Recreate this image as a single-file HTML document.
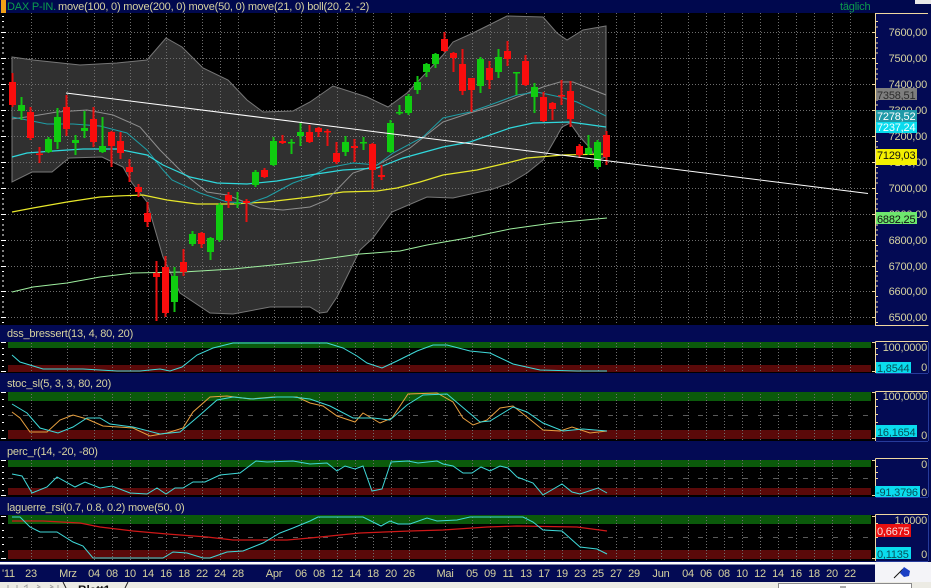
<!DOCTYPE html>
<html><head><meta charset="utf-8"><style>
html,body{margin:0;padding:0;background:#000;width:931px;height:588px;overflow:hidden}
svg{display:block}
text{font-family:"Liberation Sans",sans-serif;font-size:11px;letter-spacing:-.2px}
.c{fill:#d6d2a0}
.e{text-anchor:end}
.m{text-anchor:middle}
.l{fill:none}
</style></head><body>
<svg width="931" height="588" viewBox="0 0 931 588" xmlns="http://www.w3.org/2000/svg">
<rect width="931" height="588" fill="#000"/>
<!-- bollinger area -->
<polygon fill="#303030" stroke="#777" stroke-width="1" points="12,57 33,60 80,65 117,63 147,60 166,38 182,47 203,68 228,80 247,100 263,112 293,111 310,102 333,86 367,97 388,107 407,93 443,55 453,42 473,33 507,16 543,17 557,33 567,40 583,30 606,26 606,157 597,160 590,148 580,137 570,123 562,127 553,143 543,160 527,173 510,183 493,189 453,198 427,197 392,212 373,238 360,250 337,297 327,312 320,313 310,307 270,307 233,314 210,313 180,293 163,257 147,202 132,183 123,167 102,157 69,158 52,172 32,172 12,182"/>
<!-- indicator bands -->
<rect x="8" y="342" width="863" height="6" fill="#0b5a0b"/><rect x="8" y="365" width="863" height="7" fill="#5a0909"/>
<rect x="8" y="392" width="863" height="9" fill="#0b5a0b"/><rect x="8" y="430" width="863" height="9" fill="#5a0909"/>
<rect x="8" y="460" width="863" height="7" fill="#0b5a0b"/><rect x="8" y="488" width="863" height="7" fill="#5a0909"/>
<rect x="8" y="515" width="863" height="9" fill="#0b5a0b"/><rect x="8" y="550" width="863" height="9" fill="#5a0909"/>
<!-- grid -->
<path fill="none" stroke="#6e6e6e" stroke-dasharray="1 2" d="M31.5 13V562M67.5 13V562M94.5 13V562M112.5 13V562M130.5 13V562M148.5 13V562M166.5 13V562M184.5 13V562M202.5 13V562M220.5 13V562M238.5 13V562M274.5 13V562M301.5 13V562M319.5 13V562M337.5 13V562M355.5 13V562M373.5 13V562M391.5 13V562M409.5 13V562M445.5 13V562M472.5 13V562M490.5 13V562M508.5 13V562M526.5 13V562M544.5 13V562M562.5 13V562M580.5 13V562M598.5 13V562M616.5 13V562M634.5 13V562M661.5 13V562M688.5 13V562M706.5 13V562M724.5 13V562M742.5 13V562M760.5 13V562M778.5 13V562M796.5 13V562M814.5 13V562M832.5 13V562M850.5 13V562"/>
<path fill="none" stroke="#6e6e6e" stroke-dasharray="1 2" d="M8 32.5H871M8 58.5H871M8 84.5H871M8 110.5H871M8 136.5H871M8 162.5H871M8 188.5H871M8 214.5H871M8 240.5H871M8 266.5H871M8 291.5H871M8 317.5H871"/>
<path fill="none" stroke="#5a5a5a" stroke-dasharray="5 10" d="M8 415.5H871M8 478.5H871M8 537.5H871"/>
<!-- moving averages -->
<polyline class="l" stroke="#9fef9f" points="12,292 33,287 67,283 100,277 133,273 183,272 233,269 283,264 310,261 360,254 400,251 427,245 467,238 510,229 553,223 607,218"/>
<polyline class="l" stroke="#e8e82a" stroke-width="1.2" points="12,212 33,208 67,202 100,197 117,196 143,195 167,200 197,204 233,204 267,202 310,197 343,192 377,191 397,188 420,182 443,175 477,170 507,163 527,158 563,155 606,154"/>
<polyline class="l" stroke="#8e8e8e" points="12,119 33,116 57,112 87,110 113,115 140,127 160,150 183,173 207,192 227,195 260,208 283,210 310,207 327,200 353,173 377,165 410,148 443,122 470,113 497,105 523,95 543,87 560,82 573,82 606,95"/>
<polyline class="l" stroke="#1f9ea6" points="12,117 27,120 47,124 73,124 100,126 127,133 147,150 163,170 172,180 200,193 227,202 250,203 267,197 293,183 310,177 327,168 353,163 377,165 393,153 423,137 443,118 470,112 490,105 517,95 537,92 560,97 577,102 606,116"/>
<polyline class="l" stroke="#2fd8dc" stroke-width="1.2" points="12,157 27,153 53,151 83,149 117,149 147,155 163,165 190,177 217,183 247,184 277,181 310,175 343,170 377,168 403,158 443,147 470,142 510,128 533,123 570,122 606,127"/>
<!-- candles wicks -->
<g transform="translate(.5 0)" fill="none">
<path stroke="#e81010" stroke-width="2" d="M12 73V107M30 107V140M39 147V163M66 95V136M93 107V147M111 131V167M120 132V159M129 159V182M138 184V197M147 202V227M156 261V321M165 256V317M183 249V276M201 232V248M228 192V208M246 199V222M264 168V178M282 135V144M309 125V143M318 127V137M327 129V146M336 142V164M354 139V162M372 143V189M381 165V180M444 32V52M453 52V72M462 49V95M471 78V112M489 61V89M507 41V66M525 55V86M543 92V122M552 102V120M561 80V105M570 81V127M579 144V158M606 131V165"/>
<path stroke="#12c412" stroke-width="2" d="M21 97V120M48 137V153M57 108V149M75 135V155M84 111V138M102 117V153M174 267V312M192 231V246M210 237V260M219 203V242M237 192V208M255 170V187M273 137V166M291 139V154M300 123V146M345 136V156M363 137V150M390 120V153M399 105V115M408 94V115M417 76V94M426 63V77M435 53V68M480 57V93M498 49V78M516 72V95M534 83V113M588 135V155M597 140V169"/>
<path stroke="#fa0d0d" stroke-width="7" d="M12 82V105M30 112V138M66 107V129M93 119V142M111 132V146M120 141V153M129 167V172M138 187V192M147 213V222M156 273V277M165 267V313M183 262V272M201 233V244M228 195V201M264 170V177M309 132V142M318 128V132M336 153V162M372 144V170M444 39V51M453 53V58M462 64V91M471 78V90M489 68V80M507 51V59M525 61V85M543 97V121M552 103V109M570 91V119M579 146V155M606 135V157"/>
<path stroke="#fa0d0d" stroke-width="7" d="M39 153.500V155M246 201V203M282 141V143M327 131V132.500M354 146V148M381 175V177M561 95V96.500"/>
<path stroke="#10cc10" stroke-width="7" d="M21 105V111M48 139V152M57 117V142M75 140V143M84 128V131M102 146V152M174 276V302M192 234V244M210 238V252M219 205V240M237 203V204M255 172V185M273 141V165M291 142V143.500M300 132V136M345 142V152M363 142V143.500M390 123V152M399 112V113.500M408 96V113M417 82V90M426 64V72M435 54V64M480 59V86M498 57V72M516 72V73.500M534 87V97M588 148V154M597 142V167"/>
</g>
<!-- trend line -->
<path d="M66 93L868 193.500" stroke="#fff" stroke-width="1" fill="none"/>
<!-- indicator lines -->
<polyline class="l" stroke="#3fd9d9" points="12,355 20,362 43,369 83,369 117,371 140,371 160,369 170,371 182,367 197,355 213,348 233,343 267,343 310,343 327,343 343,348 357,356 367,363 382,368 397,361 417,351 433,345 447,345 470,351 490,353 513,364 540,370 577,371 607,371"/>
<polyline class="l" stroke="#e8a040" points="12,412 20,418 30,432 47,432 60,420 73,415 87,419 103,426 133,428 150,436 167,433 183,428 193,412 210,397 227,396 250,399 273,397 297,397 310,403 323,406 337,416 355,422 363,413 380,423 392,418 408,394 437,393 453,402 463,418 473,425 487,420 500,408 513,406 527,417 543,430 560,431 572,427 590,433 607,431"/>
<polyline class="l" stroke="#3fd9d9" points="12,404 27,413 40,428 58,433 73,427 87,418 100,418 110,424 133,427 160,434 180,432 200,415 217,400 233,397 253,399 277,397 293,397 310,399 330,406 353,418 373,418 390,420 407,405 423,395 447,394 460,405 480,422 490,421 513,407 527,412 543,423 563,431 583,429 607,431"/>
<polyline class="l" stroke="#3fd9d9" points="12,474 22,476 32,493 47,487 57,477 75,487 85,482 100,488 112,486 130,493 147,494 157,488 166,494 175,488 183,488 193,482 205,482 220,475 240,473 256,461 267,462 293,461 310,464 327,463 337,471 345,466 355,469 363,466 372,491 382,489 391,462 408,461 418,463 437,461 443,464 453,466 463,473 472,473 481,467 490,471 500,466 508,468 517,477 533,483 543,495 562,484 572,492 580,494 598,488 607,493"/>
<polyline class="l" stroke="#d01818" stroke-width="1.2" points="12,521 43,521 80,523 100,527 133,531 167,534 207,537 233,540 260,540 287,540 310,538 330,536 360,533 410,531 443,530 487,527 517,526 577,527 607,531"/>
<polyline class="l" stroke="#3fd9d9" points="12,517 20,517 30,527 40,532 57,532 73,542 83,546 93,558 150,558 163,558 173,552 187,553 203,558 210,558 227,552 243,551 263,543 280,533 293,528 310,521 318,517 363,517 381,526 390,521 398,524 410,524 427,518 437,521 457,520 470,517 523,517 533,522 543,530 562,531 580,547 597,549 607,554"/>
<!-- header bands -->
<rect x="0" y="0" width="931" height="13" fill="#00084e"/>
<rect x="1" y="0" width="5" height="13" fill="#f0a018"/>
<rect x="0" y="325" width="875" height="17" fill="#030a54"/>
<rect x="0" y="373" width="875" height="19" fill="#030a54"/>
<rect x="0" y="441" width="875" height="19" fill="#030a54"/>
<rect x="0" y="497" width="875" height="18" fill="#030a54"/>
<text x="7" y="10" fill="#0c9c4c">DAX P-IN.</text>
<text x="58" y="10" class="c">move(100, 0) move(200, 0) move(50, 0) move(21, 0) boll(20, 2, -2)</text>
<text x="840" y="10" fill="#0c9c4c">täglich</text>
<rect x="915" y="0" width="16" height="4" fill="#e8e8e8"/>
<text x="7" y="337" class="c">dss_bressert(13, 4, 80, 20)</text>
<text x="7" y="387" class="c">stoc_sl(5, 3, 3, 80, 20)</text>
<text x="7" y="455" class="c">perc_r(14, -20, -80)</text>
<text x="7" y="511" class="c">laguerre_rsi(0.7, 0.8, 0.2) move(50, 0)</text>
<!-- left ticks -->
<path fill="none" stroke="#fff" d="M2 16.500H4M2 21.500H4M2 27H4M1 32.500H6M2 37.500H4M2 43H4M2 48H4M2 53H4M1 58.500H6M2 63.500H4M2 69H4M2 74H4M2 79H4M1 84.500H6M2 89.500H4M2 95H4M2 100H4M2 105H4M1 110.500H6M2 115.500H4M2 121H4M2 126H4M2 131H4M1 136.500H6M2 141.500H4M2 147H4M2 152H4M2 157H4M1 162.500H6M2 167.500H4M2 173H4M2 178H4M2 183H4M1 188.500H6M2 193.500H4M2 199H4M2 204H4M2 209H4M1 214.500H6M2 219.500H4M2 225H4M2 230H4M2 235H4M1 240.500H6M2 245.500H4M2 251H4M2 256H4M2 261H4M1 266.500H6M2 271.500H4M2 276H4M2 281H4M2 286H4M1 291.500H6M2 296.500H4M2 302H4M2 307H4M2 312H4M1 317.500H6M2 322.500H4"/>
<path fill="none" stroke="#fff" d="M1 342.500H6M2 348.500H4M2 354.500H4M2 360.500H4M2 366.500H4M1 371.500H6M1 392.500H6M2 399.500H4M2 406.500H4M2 414.500H4M2 422.500H4M2 430.500H4M1 438.500H6M1 460.500H6M2 466.500H4M2 472.500H4M2 478.500H4M2 484.500H4M2 490.500H4M1 495.500H6M1 516.500H6M2 523.500H4M2 530.500H4M2 537.500H4M2 544.500H4M2 551.500H4M1 558.500H6"/>
<!-- right axis -->
<rect x="875" y="13" width="56" height="549" fill="#030a54"/>
<rect x="875" y="0" width="40" height="13" fill="#00084e"/>
<path fill="none" stroke="#f0d8a0" d="M928 13.500H875.500V325.500H928.500M875.500 341.500H928M875.500 341.500V373M875.500 391.500H928M875.500 391.500V441M875.500 458.500H928M875.500 458.500V497M875.500 514.500H928M875.500 514.500V561"/>
<path fill="none" stroke="#263a9a" d="M876 373.500H928M928.500 342V373M876 441.500H928M928.500 392V441M876 497.500H928M928.500 459V497M876 561.500H928M928.500 515V561"/>
<path fill="none" stroke="#f0d8a0" d="M872 32.500H875M872 58.500H875M872 84.500H875M872 110.500H875M872 136.500H875M872 162.500H875M872 188.500H875M872 214.500H875M872 240.500H875M872 266.500H875M872 291.500H875M872 317.500H875M876 21.500H878M876 27H878M876 37.500H878M876 43H878M876 48H878M876 53H878M876 63.500H878M876 69H878M876 74H878M876 79H878M876 89.500H878M876 95H878M876 100H878M876 105H878M876 115.500H878M876 121H878M876 126H878M876 131H878M876 141.500H878M876 147H878M876 152H878M876 157H878M876 167.500H878M876 173H878M876 178H878M876 183H878M876 193.500H878M876 199H878M876 204H878M876 209H878M876 219.500H878M876 225H878M876 230H878M876 235H878M876 245.500H878M876 251H878M876 256H878M876 261H878M876 271.500H878M876 276H878M876 281H878M876 286H878M876 296.500H878M876 302H878M876 307H878M876 312H878M876 322.500H878M872 342.500H875M872 371.500H875M872 392.500H875M872 438.500H875M872 460.500H875M872 495.500H875M872 516.500H875M872 558.500H875M876 399.500H878M876 406.500H878M876 414.500H878M876 422.500H878M876 466.500H878M876 472.500H878M876 478.500H878M876 523.500H878M876 530.500H878M876 537.500H878M876 348.500H878M876 354.500H878"/>
<text class="c e" x="927" y="36">7600,00</text>
<text class="c e" x="927" y="62">7500,00</text>
<text class="c e" x="927" y="88">7400,00</text>
<text class="c e" x="927" y="114">7300,00</text>
<text class="c e" x="927" y="140">7200,00</text>
<text class="c e" x="927" y="166">7100,00</text>
<text class="c e" x="927" y="192">7000,00</text>
<text class="c e" x="927" y="218">6900,00</text>
<text class="c e" x="927" y="244">6800,00</text>
<text class="c e" x="927" y="270">6700,00</text>
<text class="c e" x="927" y="295">6600,00</text>
<text class="c e" x="927" y="321">6500,00</text>
<text class="c e" x="927" y="351">100,0000</text>
<text class="c e" x="927" y="371">0</text>
<text class="c e" x="927" y="400">100,0000</text>
<text class="c e" x="927" y="439">0</text>
<text class="c e" x="927" y="468">0</text>
<text class="c e" x="927" y="496">0</text>
<text class="c e" x="927" y="524">1,0000</text>
<text class="c e" x="927" y="558">0</text>
<rect x="876" y="88" width="41" height="12" fill="#7e7e7e"/><text x="877" y="99" fill="#2c2c2c">7358,51</text>
<rect x="876" y="110" width="41" height="12" fill="#1f9aa8"/><text x="877" y="120" fill="#fff">7278,52</text>
<rect x="876" y="122" width="41" height="11" fill="#08dcee"/><text x="877" y="131" fill="#f4ffff">7237,24</text>
<rect x="876" y="149" width="41" height="16" fill="#f4f000"/><text x="877" y="159" fill="#111">7129,03</text>
<rect x="876" y="212" width="41" height="12" fill="#6ee86e"/><text x="877" y="223" fill="#111">6882,25</text>
<rect x="876" y="362" width="35" height="11" fill="#0adcee"/><text x="877" y="372" fill="#05505a">1,8544</text>
<rect x="876" y="425" width="41" height="12" fill="#0adcee"/><text x="877" y="436" fill="#05505a">16,1654</text>
<rect x="875" y="486" width="45" height="11" fill="#0adcee"/><text x="876" y="496" fill="#05505a">-91,3796</text>
<rect x="876" y="524" width="35" height="13" fill="#e81010"/><text x="877" y="535" fill="#f6e0e0">0,6675</text>
<rect x="876" y="547" width="35" height="12" fill="#0adcee"/><text x="877" y="558" fill="#05505a">0,1135</text>
<!-- date axis -->
<rect x="0" y="561" width="875" height="21" fill="#030a54"/>
<rect x="0" y="562" width="875" height="2.500" fill="#fff"/>
<text class="c" x="2" y="577">'11</text>
<text class="c m" x="31" y="577">23</text><text class="c m" x="68" y="577">Mrz</text><text class="c m" x="94" y="577">04</text><text class="c m" x="112" y="577">08</text><text class="c m" x="130" y="577">10</text><text class="c m" x="148" y="577">14</text><text class="c m" x="166" y="577">16</text><text class="c m" x="184" y="577">18</text><text class="c m" x="202" y="577">22</text><text class="c m" x="220" y="577">24</text><text class="c m" x="238" y="577">28</text><text class="c m" x="274" y="577">Apr</text><text class="c m" x="301" y="577">06</text><text class="c m" x="319" y="577">08</text><text class="c m" x="337" y="577">12</text><text class="c m" x="355" y="577">14</text><text class="c m" x="373" y="577">18</text><text class="c m" x="391" y="577">20</text><text class="c m" x="409" y="577">26</text><text class="c m" x="445" y="577">Mai</text><text class="c m" x="472" y="577">05</text><text class="c m" x="490" y="577">09</text><text class="c m" x="508" y="577">11</text><text class="c m" x="526" y="577">13</text><text class="c m" x="544" y="577">17</text><text class="c m" x="562" y="577">19</text><text class="c m" x="580" y="577">23</text><text class="c m" x="598" y="577">25</text><text class="c m" x="616" y="577">27</text><text class="c m" x="634" y="577">29</text><text class="c m" x="661" y="577">Jun</text><text class="c m" x="688" y="577">04</text><text class="c m" x="706" y="577">06</text><text class="c m" x="724" y="577">08</text><text class="c m" x="742" y="577">10</text><text class="c m" x="760" y="577">12</text><text class="c m" x="778" y="577">14</text><text class="c m" x="796" y="577">16</text><text class="c m" x="814" y="577">18</text><text class="c m" x="832" y="577">20</text><text class="c m" x="850" y="577">22</text>
<!-- flag corner -->
<rect x="875" y="562" width="56" height="20" fill="#f4f4f8"/>
<path d="M894 578L903 569" stroke="#111" stroke-width="1" fill="none"/>
<polygon points="904,567 910,571 909,576 904,577 900,573" fill="#1a3fc4"/>
<!-- tab bar -->
<rect x="0" y="582" width="931" height="6" fill="#ecebe4"/>
<path d="M8 585v3M17 585v3M24 587l3-2v3M37 585l3 2-3 1M50 585l3 2-3 1M58 585v3" stroke="#a0a0a0" fill="none"/>
<path d="M63 582l3 6M125 588l3-6" stroke="#222" fill="none"/>
<text x="78" y="594" style="font-weight:bold;font-size:12px" fill="#111">Blatt1</text>
<rect x="778.500" y="583.500" width="133" height="6" fill="#fff" stroke="#8a8a8a"/>
<path d="M841 586v2M843 586v2M845 586v2" stroke="#555"/>
</svg>
</body></html>
